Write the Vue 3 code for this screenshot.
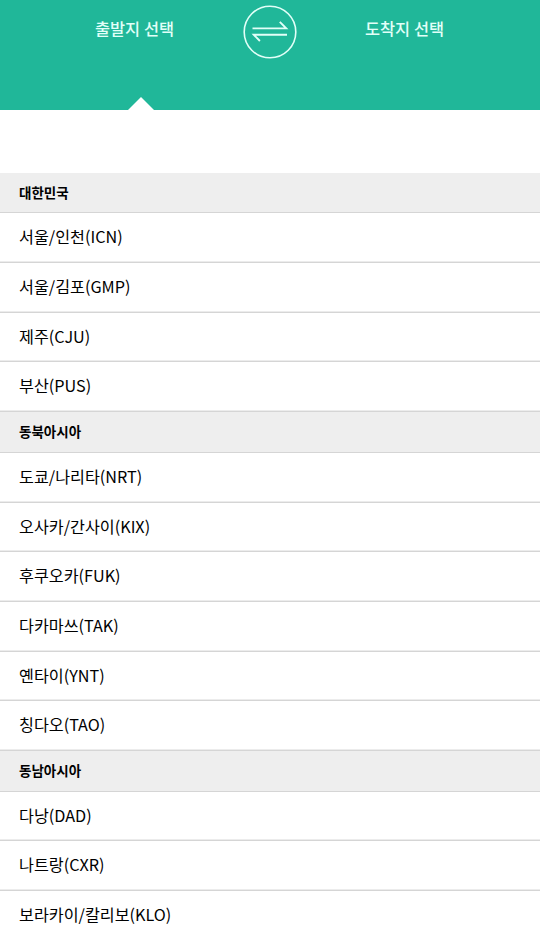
<template>
  <div class="page">
    <header class="route-header">
      <button class="route-tab active">출발지 선택</button>
      <button class="swap" aria-label="swap">
        <svg width="54" height="54" viewBox="0 0 54 54" fill="none" stroke="#e2fff8">
          <circle cx="27" cy="27" r="25.8" stroke-width="1.6" />
          <path d="M9.5 23.4H43.2L36.8 16.9" stroke-width="1.9" />
          <path d="M44 29.8H10.8L16.9 36" stroke-width="1.9" />
        </svg>
      </button>
      <button class="route-tab">도착지 선택</button>
    </header>

    <section v-for="region in regions" :key="region.name" class="region">
      <h2>{{ region.name }}</h2>
      <ul>
        <li v-for="airport in region.airports" :key="airport">{{ airport }}</li>
      </ul>
    </section>
  </div>
</template>

<script setup>
const regions = [
  {
    name: "대한민국",
    airports: ["서울/인천(ICN)", "서울/김포(GMP)", "제주(CJU)", "부산(PUS)"]
  },
  {
    name: "동북아시아",
    airports: [
      "도쿄/나리타(NRT)",
      "오사카/간사이(KIX)",
      "후쿠오카(FUK)",
      "다카마쓰(TAK)",
      "옌타이(YNT)",
      "칭다오(TAO)"
    ]
  },
  {
    name: "동남아시아",
    airports: ["다낭(DAD)", "나트랑(CXR)", "보라카이/칼리보(KLO)"]
  }
]
</script>

<style>
body {
  margin: 0;
  background: #fff;
}
</style>

<style scoped>
.page {
  height: 939px;
  overflow: hidden;
  font-family: "Noto Sans CJK KR", sans-serif;
  color: #000;
}

.route-header {
  display: grid;
  grid-template-columns: 1fr 54px 1fr;
  align-items: start;
  height: 110px;
  margin-bottom: 62.6px;
  background: #20b799;
}

button {
  padding: 0;
  border: 0;
  background: none;
  font-family: inherit;
}

.route-tab {
  position: relative;
  height: 110px;
  padding: 0 0 54px 26px;
  color: #e2fff8;
  font-size: 16.4px;
  font-weight: 500;
  line-height: 56px;
}

.route-tab:last-child {
  padding: 0 28px 54px 0;
}

.route-tab.active::after {
  content: "";
  position: absolute;
  left: 128px;
  bottom: 0;
  border: 13px solid transparent;
  border-top: 0;
  border-bottom-color: #fff;
}

.swap {
  height: 54px;
  margin-top: 5px;
}

.swap svg {
  display: block;
}

h2 {
  box-sizing: border-box;
  height: 40.8px;
  margin: 0;
  padding-left: 19px;
  border-bottom: 1px solid #d5d5d5;
  background: #eee;
  font-size: 13.5px;
  font-weight: 700;
  line-height: 38.5px;
}

ul {
  margin: 0;
  padding: 0;
  list-style: none;
}

li {
  box-sizing: border-box;
  height: 49.68px;
  padding-left: 19px;
  border-bottom: 1px solid #d5d5d5;
  box-shadow: inset 0 -1px #ececec;
  font-size: 16.2px;
  line-height: 46.4px;
}
</style>
